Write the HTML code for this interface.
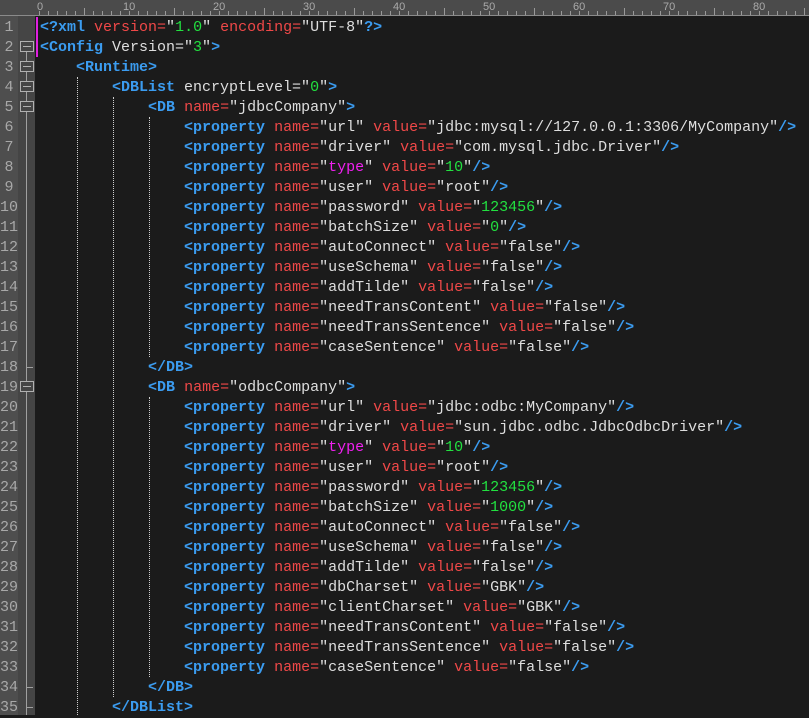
<!DOCTYPE html>
<html><head><meta charset="utf-8"><style>
body{margin:0;width:809px;height:715px;overflow:hidden;background:#1b1b1b;position:relative;font-family:"Liberation Mono",monospace}
#ruler{position:absolute;left:0;top:0;width:809px;height:15px;background:#4b4b4b;border-bottom:1px solid #8a8a8a}
#ticks{position:absolute;left:39px;top:11px;width:780px;height:4px;background:repeating-linear-gradient(to right,#999 0,#999 1px,transparent 1px,transparent 9px)}
.tk5{position:absolute;top:8px;width:1px;height:7px;background:#999}
.rl{position:absolute;top:1px;font:11px "Liberation Sans",sans-serif;color:#aaa;line-height:12px}
#ln{position:absolute;left:0;top:16px;width:18px;height:699px;background:#4e4e4e}
#fd{position:absolute;left:18px;top:16px;width:17px;height:699px;background:#454545}
#mg{position:absolute;left:36px;top:17px;width:2px;height:40px;background:#e020e0}
.num{position:absolute;left:0;width:18px;text-align:center;font:15px "Liberation Mono",monospace;color:#a8a8a8;line-height:20px}
.box{position:absolute;left:20px;width:12px;height:9px;border:1px solid #b0b0b0;background:#454545}
.box:after{content:"";position:absolute;left:2px;right:2px;top:4px;height:1px;background:#b0b0b0}
.vl{position:absolute;left:26px;width:1px;background:#a0a0a0}
.hl{position:absolute;left:26px;width:7px;height:1px;background:#a0a0a0}
.g{position:absolute;width:0;border-left:1px dotted #cfcfcf}
pre{position:absolute;left:40px;top:18px;margin:0;font:15px/20px "Liberation Mono",monospace;color:#dedede}
.t{color:#3b9cf0;font-weight:bold}.a{color:#f04848}.n{color:#22e040}.m{color:#f020f0}
</style></head><body>
<div id="ruler"><div id="ticks"></div>
<div class="tk5" style="left:84px"></div><div class="tk5" style="left:174px"></div><div class="tk5" style="left:264px"></div><div class="tk5" style="left:354px"></div><div class="tk5" style="left:444px"></div><div class="tk5" style="left:534px"></div><div class="tk5" style="left:624px"></div><div class="tk5" style="left:714px"></div><div class="tk5" style="left:804px"></div>
<div class="rl" style="left:37px">0</div><div class="rl" style="left:123px">10</div><div class="rl" style="left:213px">20</div><div class="rl" style="left:303px">30</div><div class="rl" style="left:393px">40</div><div class="rl" style="left:483px">50</div><div class="rl" style="left:573px">60</div><div class="rl" style="left:663px">70</div><div class="rl" style="left:753px">80</div>
</div>
<div id="ln"></div><div id="fd"></div><div id="mg"></div>
<div class="vl" style="top:52px;height:663px"></div>
<div class="box" style="top:41px"></div><div class="box" style="top:61px"></div><div class="box" style="top:81px"></div><div class="box" style="top:101px"></div><div class="box" style="top:381px"></div>
<div class="hl" style="top:367px"></div><div class="hl" style="top:687px"></div><div class="hl" style="top:707px"></div>
<div class="g" style="left:77px;top:77px;height:638px"></div>
<div class="g" style="left:113px;top:97px;height:600px"></div>
<div class="g" style="left:149px;top:117px;height:240px"></div>
<div class="g" style="left:149px;top:397px;height:280px"></div>
<div id="nums"></div>
<script>
var h='';for(var i=1;i<=35;i++){h+='<div class="num" style="top:'+(18+20*(i-1))+'px">'+i+'</div>';}document.getElementById('nums').innerHTML=h;
</script>
<pre><span class="t">&lt;?xml</span> <span class="a">version=</span>"<span class="n">1.0</span>" <span class="a">encoding=</span>"UTF-8"<span class="t">?&gt;</span>
<span class="t">&lt;Config</span> Version="<span class="n">3</span>"<span class="t">&gt;</span>
    <span class="t">&lt;Runtime&gt;</span>
        <span class="t">&lt;DBList</span> encryptLevel="<span class="n">0</span>"<span class="t">&gt;</span>
            <span class="t">&lt;DB</span> <span class="a">name=</span>"jdbcCompany"<span class="t">&gt;</span>
                <span class="t">&lt;property</span> <span class="a">name=</span>"url" <span class="a">value=</span>"jdbc:mysql://127.0.0.1:3306/MyCompany"<span class="t">/&gt;</span>
                <span class="t">&lt;property</span> <span class="a">name=</span>"driver" <span class="a">value=</span>"com.mysql.jdbc.Driver"<span class="t">/&gt;</span>
                <span class="t">&lt;property</span> <span class="a">name=</span>"<span class="m">type</span>" <span class="a">value=</span>"<span class="n">10</span>"<span class="t">/&gt;</span>
                <span class="t">&lt;property</span> <span class="a">name=</span>"user" <span class="a">value=</span>"root"<span class="t">/&gt;</span>
                <span class="t">&lt;property</span> <span class="a">name=</span>"password" <span class="a">value=</span>"<span class="n">123456</span>"<span class="t">/&gt;</span>
                <span class="t">&lt;property</span> <span class="a">name=</span>"batchSize" <span class="a">value=</span>"<span class="n">0</span>"<span class="t">/&gt;</span>
                <span class="t">&lt;property</span> <span class="a">name=</span>"autoConnect" <span class="a">value=</span>"false"<span class="t">/&gt;</span>
                <span class="t">&lt;property</span> <span class="a">name=</span>"useSchema" <span class="a">value=</span>"false"<span class="t">/&gt;</span>
                <span class="t">&lt;property</span> <span class="a">name=</span>"addTilde" <span class="a">value=</span>"false"<span class="t">/&gt;</span>
                <span class="t">&lt;property</span> <span class="a">name=</span>"needTransContent" <span class="a">value=</span>"false"<span class="t">/&gt;</span>
                <span class="t">&lt;property</span> <span class="a">name=</span>"needTransSentence" <span class="a">value=</span>"false"<span class="t">/&gt;</span>
                <span class="t">&lt;property</span> <span class="a">name=</span>"caseSentence" <span class="a">value=</span>"false"<span class="t">/&gt;</span>
            <span class="t">&lt;/DB&gt;</span>
            <span class="t">&lt;DB</span> <span class="a">name=</span>"odbcCompany"<span class="t">&gt;</span>
                <span class="t">&lt;property</span> <span class="a">name=</span>"url" <span class="a">value=</span>"jdbc:odbc:MyCompany"<span class="t">/&gt;</span>
                <span class="t">&lt;property</span> <span class="a">name=</span>"driver" <span class="a">value=</span>"sun.jdbc.odbc.JdbcOdbcDriver"<span class="t">/&gt;</span>
                <span class="t">&lt;property</span> <span class="a">name=</span>"<span class="m">type</span>" <span class="a">value=</span>"<span class="n">10</span>"<span class="t">/&gt;</span>
                <span class="t">&lt;property</span> <span class="a">name=</span>"user" <span class="a">value=</span>"root"<span class="t">/&gt;</span>
                <span class="t">&lt;property</span> <span class="a">name=</span>"password" <span class="a">value=</span>"<span class="n">123456</span>"<span class="t">/&gt;</span>
                <span class="t">&lt;property</span> <span class="a">name=</span>"batchSize" <span class="a">value=</span>"<span class="n">1000</span>"<span class="t">/&gt;</span>
                <span class="t">&lt;property</span> <span class="a">name=</span>"autoConnect" <span class="a">value=</span>"false"<span class="t">/&gt;</span>
                <span class="t">&lt;property</span> <span class="a">name=</span>"useSchema" <span class="a">value=</span>"false"<span class="t">/&gt;</span>
                <span class="t">&lt;property</span> <span class="a">name=</span>"addTilde" <span class="a">value=</span>"false"<span class="t">/&gt;</span>
                <span class="t">&lt;property</span> <span class="a">name=</span>"dbCharset" <span class="a">value=</span>"GBK"<span class="t">/&gt;</span>
                <span class="t">&lt;property</span> <span class="a">name=</span>"clientCharset" <span class="a">value=</span>"GBK"<span class="t">/&gt;</span>
                <span class="t">&lt;property</span> <span class="a">name=</span>"needTransContent" <span class="a">value=</span>"false"<span class="t">/&gt;</span>
                <span class="t">&lt;property</span> <span class="a">name=</span>"needTransSentence" <span class="a">value=</span>"false"<span class="t">/&gt;</span>
                <span class="t">&lt;property</span> <span class="a">name=</span>"caseSentence" <span class="a">value=</span>"false"<span class="t">/&gt;</span>
            <span class="t">&lt;/DB&gt;</span>
        <span class="t">&lt;/DBList&gt;</span></pre>
</body></html>
